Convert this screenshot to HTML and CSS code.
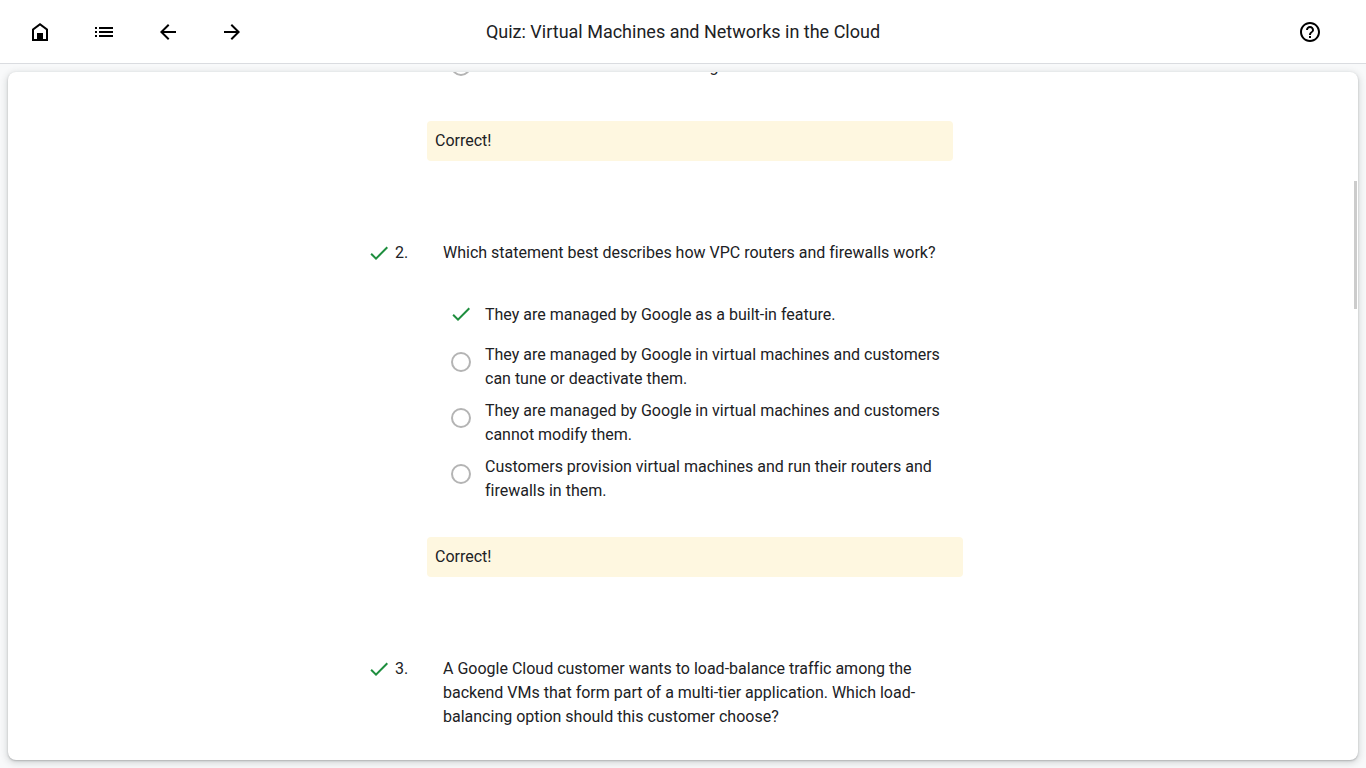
FILE: index.html
```html
<!DOCTYPE html>
<html lang="en">
<head>
<meta charset="utf-8">
<meta name="viewport" content="width=device-width, initial-scale=1">
<title>Quiz: Virtual Machines and Networks in the Cloud</title>
<link rel="stylesheet" href="styles.css">
</head>
<body>
<header class="topbar">
  <nav class="nav" aria-label="Course">
    <button class="icon-button" type="button" aria-label="Home"><svg class="icon" viewBox="0 0 24 24"><path fill-rule="evenodd" d="M4 21V9l8-6 8 6v12zM6 19h12v-9l-6-4.500L6 10z"/><path d="M9 13h6v7H9z"/></svg></button>
    <button class="icon-button" type="button" aria-label="Contents"><svg class="icon" viewBox="0 0 24 24"><path d="M3 7h2v2H3zM3 11h2v2H3zM3 15h2v2H3zM7 7h14v2H7zM7 11h14v2H7zM7 15h14v2H7z"/></svg></button>
    <button class="icon-button" type="button" aria-label="Previous"><svg class="icon" viewBox="0 0 24 24"><path d="M20 11H7.83l5.59-5.59L12 4l-8 8 8 8 1.41-1.41L7.83 13H20z"/></svg></button>
    <button class="icon-button" type="button" aria-label="Next"><svg class="icon" viewBox="0 0 24 24"><path d="M4 11h12.17l-5.59-5.59L12 4l8 8-8 8-1.41-1.41L16.17 13H4z"/></svg></button>
  </nav>
  <h1 class="title">Quiz: Virtual Machines and Networks in the Cloud</h1>
  <div class="actions">
    <button class="icon-button" type="button" aria-label="Help"><svg class="icon" viewBox="0 0 24 24"><path d="M11 18h2v-2h-2v2zm1-16C6.48 2 2 6.48 2 12s4.48 10 10 10 10-4.480 10-10S17.520 2 12 2zm0 18c-4.410 0-8-3.590-8-8s3.590-8 8-8 8 3.590 8 8-3.590 8-8 8zm0-14c-2.210 0-4 1.790-4 4h2c0-1.100.9-2 2-2s2 .9 2 2c0 2-3 1.750-3 5h2c0-2.250 3-2.500 3-5 0-2.210-1.790-4-4-4z"/></svg></button>
  </div>
</header>
<main class="card">
  <div class="quiz">
    <section class="question">
      <div class="body body-narrow">
        <div class="options">
          <label class="option"><input class="radio" type="radio" name="q1" disabled><span class="option-text">Both networks and subnets are global.</span></label>
        </div>
        <p class="feedback">Correct!</p>
      </div>
    </section>
    <section class="question">
      <svg class="check" viewBox="0 0 24 24" role="img" aria-label="Correct"><path d="M9 16.170L4.830 12l-1.420 1.410L9 19 21 7l-1.410-1.410z"/></svg>
      <span class="number">2.</span>
      <div class="body">
        <h2 class="prompt">Which statement best describes how VPC routers and firewalls work?</h2>
        <div class="options">
          <label class="option"><span class="picked"><input class="picked-input" type="radio" name="q2" checked disabled><svg class="check" viewBox="0 0 24 24" aria-hidden="true"><path d="M9 16.170L4.830 12l-1.420 1.410L9 19 21 7l-1.410-1.410z"/></svg></span><span class="option-text">They are managed by Google as a built-in feature.</span></label>
          <label class="option"><input class="radio" type="radio" name="q2" disabled><span class="option-text">They are managed by Google in virtual machines and customers can tune or deactivate them.</span></label>
          <label class="option"><input class="radio" type="radio" name="q2" disabled><span class="option-text">They are managed by Google in virtual machines and customers cannot modify them.</span></label>
          <label class="option"><input class="radio" type="radio" name="q2" disabled><span class="option-text">Customers provision virtual machines and run their routers and firewalls in them.</span></label>
        </div>
        <p class="feedback">Correct!</p>
      </div>
    </section>
    <section class="question">
      <svg class="check" viewBox="0 0 24 24" role="img" aria-label="Correct"><path d="M9 16.170L4.830 12l-1.420 1.410L9 19 21 7l-1.410-1.410z"/></svg>
      <span class="number">3.</span>
      <div class="body">
        <h2 class="prompt">A Google Cloud customer wants to load-balance traffic among the backend VMs that form part of a multi-tier application. Which load-balancing option should this customer choose?</h2>
      </div>
    </section>
  </div>
  <div class="scroll-thumb"></div>
</main>
</body>
</html>
```
FILE: styles.css
```css
* { box-sizing: border-box; }

body {
  margin: 0;
  height: 100vh;
  display: flex;
  flex-direction: column;
  overflow: hidden;
  background: #f8f9fa;
  color: #202124;
  font: 16px/24px Roboto, "Liberation Sans", sans-serif;
  font-variant-ligatures: none;
}

.topbar {
  display: grid;
  grid-template-columns: 1fr auto 1fr;
  align-items: center;
  height: 64px;
  flex: none;
  padding: 0 32px 0 16px;
  background: #fff;
  border-bottom: 1px solid #dadce0;
}
.nav { display: flex; gap: 16px; margin-right: -16px; }
.actions { display: flex; justify-content: flex-end; }
.icon-button {
  display: grid;
  place-items: center;
  width: 48px;
  height: 48px;
  padding: 0;
  border: 0;
  border-radius: 50%;
  background: none;
  color: #000;
}
.icon { width: 24px; height: 24px; fill: currentColor; }
.title {
  margin: 0;
  padding-left: 16px;
  font: 400 18px/24px "Google Sans", Roboto, sans-serif;
}

.card {
  position: relative;
  flex: 1;
  min-height: 0;
  margin: 8px;
  overflow: hidden;
  background: #fff;
  border-radius: 8px;
  box-shadow: 0 1px 2px rgba(60, 64, 67, .3), 0 2px 6px 2px rgba(60, 64, 67, .15);
}
.scroll-thumb {
  position: absolute;
  top: 109px;
  right: 1px;
  width: 3px;
  height: 128px;
  background: #ccc;
}

/* The list is shown scrolled past the first question. */
.quiz {
  display: flex;
  flex-direction: column;
  gap: 80px;
  max-width: 632px;
  margin: -55px auto 0;
}
.question { display: flex; }
.check { display: block; flex: none; width: 24px; height: 24px; fill: #1e8e3e; }
.number { flex: none; width: 32px; margin-left: 4px; }
.body { width: 536px; }
.body-narrow { width: 526px; margin-left: 60px; }
.prompt { margin: 0; padding: 0 16px; font: inherit; }
.options { padding: 26px 8px 30px 24px; }
.option {
  display: flex;
  gap: 14px;
  min-height: 48px;
  padding: 4px 0;
}
.option-text { align-self: center; }
.radio {
  flex: none;
  appearance: none;
  width: 20px;
  height: 20px;
  margin: 9px 0 0;
  border: 2px solid #b4b4b4;
  border-radius: 50%;
}
.picked {
  display: grid;
  justify-items: center;
  flex: none;
  width: 24px;
  height: 24px;
  margin: 7px -2px 0;
}
.picked-input { grid-area: 1 / 1; opacity: 0; margin: 0; }
.picked .check { grid-area: 1 / 1; }
.feedback {
  margin: 0;
  padding: 8px;
  background: #fef7e0;
  border-radius: 4px;
}
```
